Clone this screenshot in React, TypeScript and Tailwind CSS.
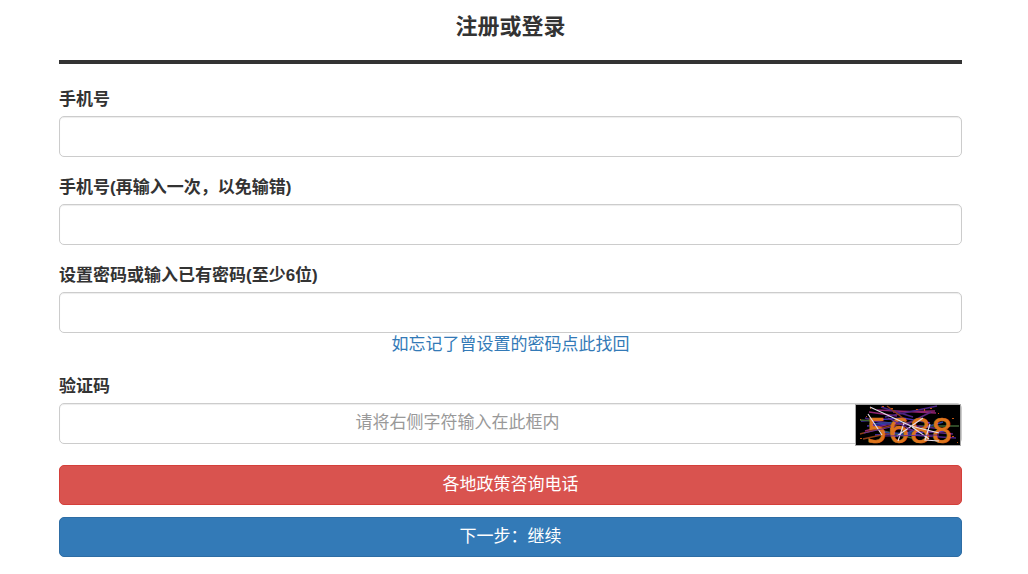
import React, { useState } from 'react';

const labelClass = 'mb-0.5 block text-[17px] leading-7 font-bold text-[#333]';
const inputClass =
  'block h-[41px] w-full rounded-[5px] border border-[#ccc] bg-white px-3.5 pb-0.5 text-[17px] text-[#555] shadow-[inset_0_1px_1px_rgba(0,0,0,0.075)] outline-none placeholder:text-[#999] focus:border-[#66afe9]';
const buttonClass = 'block h-10 w-full cursor-pointer rounded-[5px] border text-center text-[17px] text-white';

interface FieldProps {
  id: string;
  label: string;
  type: string;
  value: string;
  onChange: (value: string) => void;
}

const Field: React.FC<FieldProps> = ({ id, label, type, value, onChange }) => (
  <div>
    <label htmlFor={id} className={labelClass}>{label}</label>
    <input id={id} type={type} value={value} onChange={e => onChange(e.target.value)} className={inputClass} />
  </div>
);

const Captcha: React.FC = () => (
  <svg viewBox="0 0 106 42" className="block h-full w-full overflow-visible" role="img" aria-label="验证码">
    <rect width="106" height="42" fill="#000" />
    {/* Noise lines behind the digits */}
    <g fill="none" strokeWidth="1.4">
      <path d="M14 8L42 12M22 6L81 9M38 8L80 7M10 27L34 20" stroke="#8f2370" />
      <path d="M6 17L48 14L75 19M12 22L60 18M20 31L92 27" stroke="#4431b4" />
      <path d="M26 3L58 13M30 13L82 2M10 14L50 25M40 30L101 34" stroke="#4b2482" />
      <path d="M5 16L20 17M64 22L104 22M16 24L57 34" stroke="#3f6335" />
      <path d="M5 30L34 22L70 16M32 2L52 17M8 35L40 28" stroke="#8e3d18" />
      <path d="M18 17L88 25M52 20L76 8M35 24L98 30" stroke="#5f2780" />
      <path d="M14 20L46 18M38 33L88 18M26 28L65 31" stroke="#2b459a" />
    </g>
    <g fill="#c45512">
      <path d="M15 4h1v1h-1zM27 2h2v1h-2zM36 4h2v1h-2zM61 5h2v1h-2zM69 5h1v2h-1zM75 4h2v1h-2zM83 9h1v1h-1zM97 14h2v1h-2zM5 34h2v1h-2zM5 15h1v1h-1zM97 32h2v1h-2zM102 38h1v1h-1zM11 12h1v1h-1zM70 16h2v1h-2z" />
    </g>
    <text x="11" y="39" fontFamily="'DejaVu Sans', sans-serif" fontSize="34" fill="#dd741c" stroke="#dd741c" strokeWidth="0.5">5688</text>
    {/* Scratches over the digits */}
    <g fill="none" strokeWidth="1.2">
      <path d="M15 3L56 22L84 29M13 10L27 31M43 37L49 19M42 32L68 14M57 23L74 35M75 20L70 36L84 37" stroke="#e5dce8" />
      <path d="M9 29L36 23M30 32L84 31M33 14L59 27" stroke="#6a3090" />
    </g>
    <rect x="0.5" y="0.5" width="105" height="41" fill="none" stroke="#aaa" />
  </svg>
);

export default function App() {
  const [phone, setPhone] = useState('');
  const [phoneAgain, setPhoneAgain] = useState('');
  const [password, setPassword] = useState('');
  const [code, setCode] = useState('');

  return (
    <main className="bg-white pr-[66px] pb-4 pl-[59px] font-['Liberation_Sans','Noto_Sans_CJK_SC',sans-serif]">
      <h1 className="border-b-4 border-[#333] pt-3 pb-[18px] text-center text-[22px] leading-[30px] font-bold text-[#333]">
        注册或登录
      </h1>

      <form onSubmit={e => e.preventDefault()} className="pt-[22px]">
        <div className="flex flex-col gap-[17px]">
          <Field id="phone" label="手机号" type="tel" value={phone} onChange={setPhone} />
          <Field id="phone-again" label="手机号(再输入一次，以免输错)" type="tel" value={phoneAgain} onChange={setPhoneAgain} />

          <div>
            <Field id="password" label="设置密码或输入已有密码(至少6位)" type="password" value={password} onChange={setPassword} />
            <div className="text-center text-[17px] leading-[23px]">
              <a href="#forgot" className="text-[#337ab7] hover:underline">如忘记了曾设置的密码点此找回</a>
            </div>
          </div>

          <div>
            <label htmlFor="code" className={labelClass}>验证码</label>
            <div className="relative">
              <input
                id="code"
                type="text"
                placeholder="请将右侧字符输入在此框内"
                value={code}
                onChange={e => setCode(e.target.value)}
                className={`${inputClass} pr-[120px] text-center`}
              />
              {/* Captcha sits over the right end of the box */}
              <div className="absolute top-px right-px h-[42px] w-[106px]">
                <Captcha />
              </div>
            </div>
          </div>
        </div>

        <div className="mt-[21px] flex flex-col gap-3">
          <button type="button" className={`${buttonClass} border-[#d43f3a] bg-[#d9534f]`}>各地政策咨询电话</button>
          <button type="submit" className={`${buttonClass} border-[#2e6da4] bg-[#337ab7]`}>下一步：继续</button>
        </div>
      </form>
    </main>
  );
}
